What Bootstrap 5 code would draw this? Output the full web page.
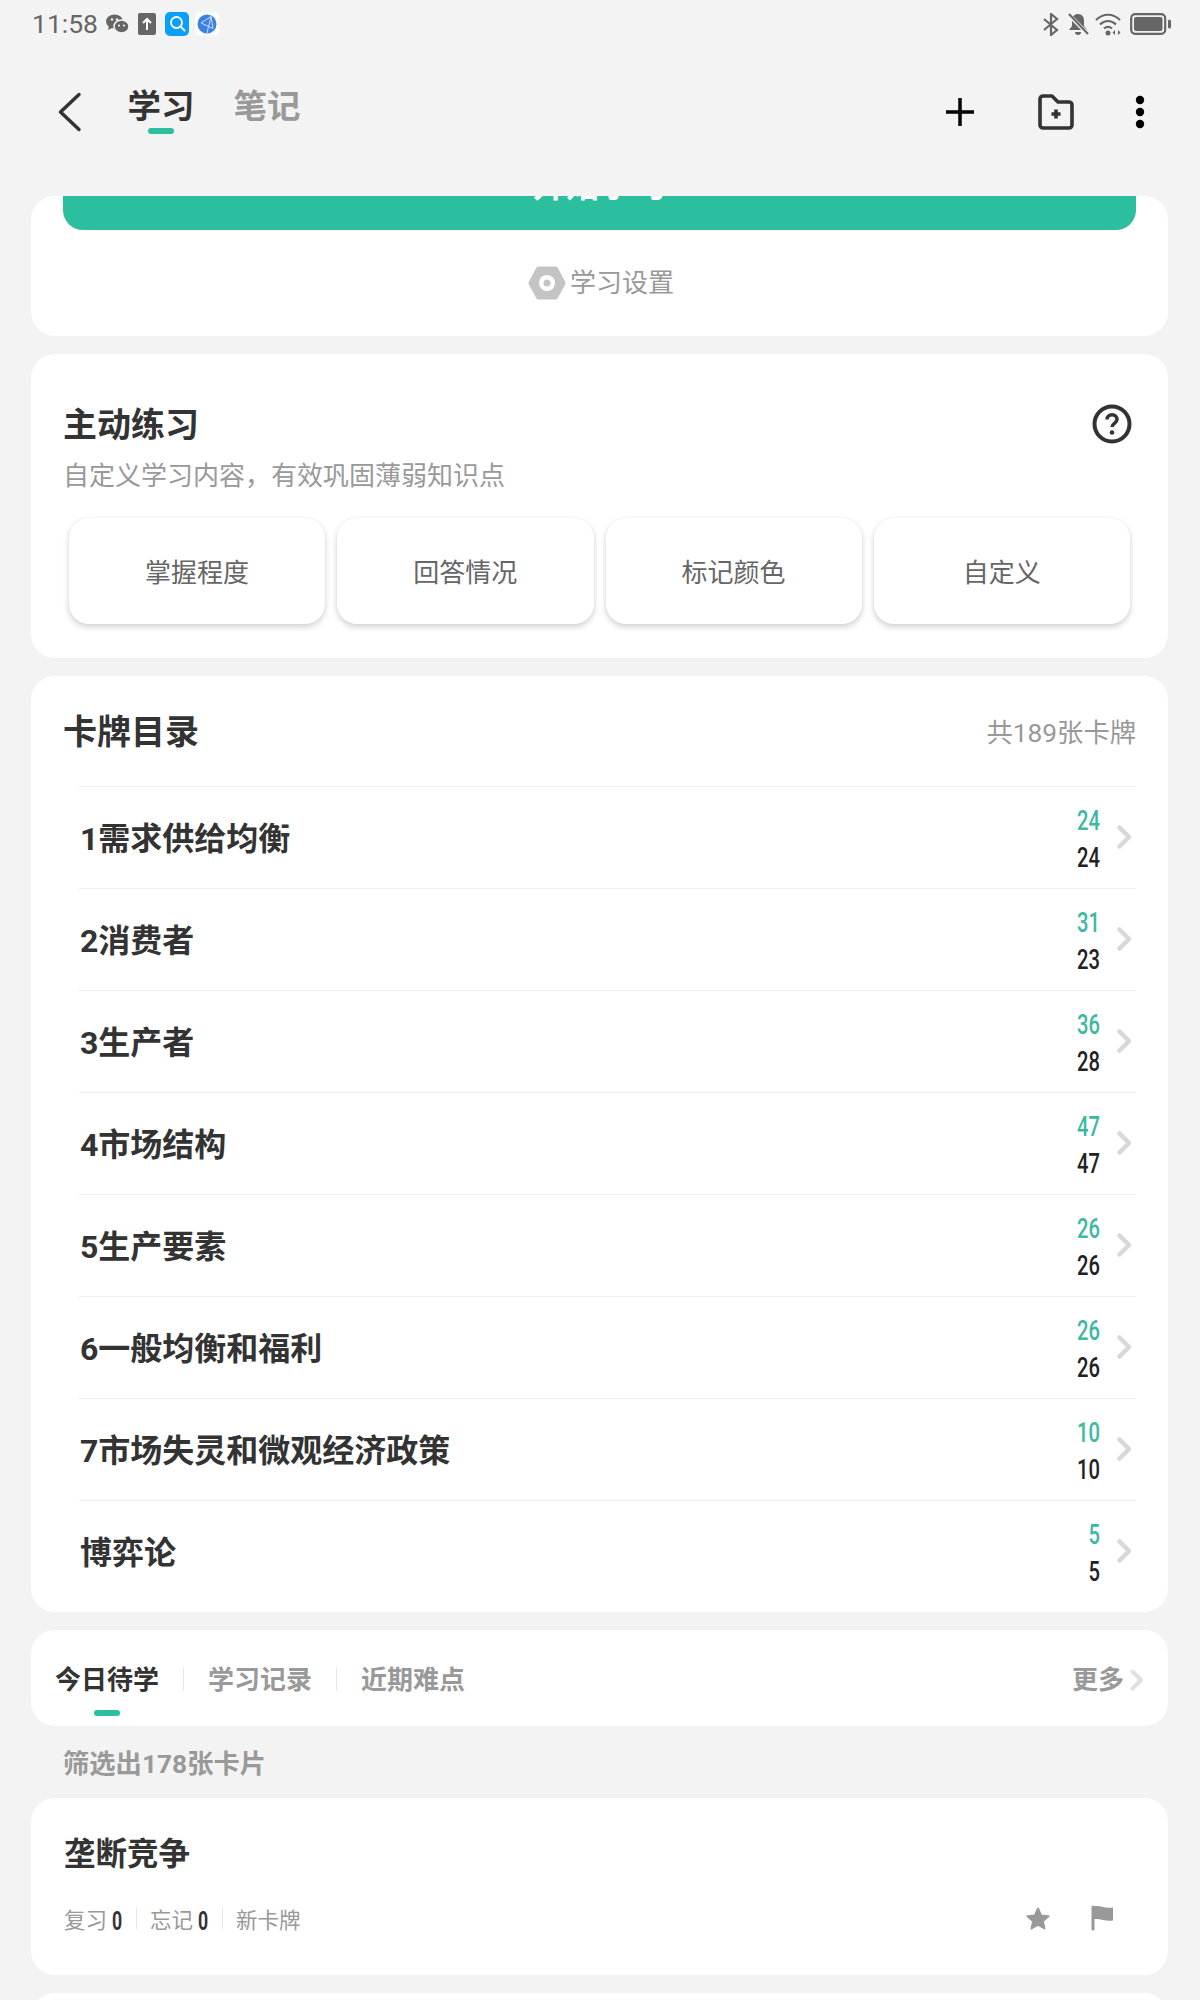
<!DOCTYPE html>
<html lang="zh">
<head>
    <meta charset="UTF-8">
    <title>学习</title>
    <link href="https://cdn.jsdelivr.net/npm/bootstrap@5.3.2/dist/css/bootstrap.min.css" rel="stylesheet">
    <style>
        body {
            background-color: #f3f3f3;
            font-family: Roboto, "Noto Sans CJK SC", "Liberation Sans", sans-serif;
            color: #333;
            width: 1200px;
            height: 2000px;
            overflow: hidden;
        }
        /* 상단 영역 */
        .status-row { height: 50px; padding: 0 29px 2px 32px; }
        .status-time { font-family: Roboto, sans-serif; font-size: 26.5px; line-height: 30px; color: #666; width: 65px; }
        .status-left { gap: 9px; }
        .status-right { gap: 8px; }
        .globe-icon { margin-left: -3px; }
        .wifi-icon { margin-left: -2px; }
        .top-nav { margin-top: 33px; height: 58px; padding: 0 54px 0 55px; margin-bottom: 55px; }
        .back-icon { margin-right: 42px; }
        .top-tab { font-size: 33.5px; line-height: 44px; padding-top: 2px; font-weight: 700; color: #999; margin-right: 38px; width: 68px; text-align: center; white-space: nowrap; }
        .top-tab.is-on { color: #333; }
        .tab-bar { display: block; width: 26px; height: 6px; border-radius: 3px; background: #2bbf9f; }
        .top-tab .tab-bar { margin: -1px 0 0 21px; }
        .plus-icon { margin-right: 60px; }
        .folder-icon { margin-right: 58px; }
        /* 스크롤 영역 */
        .scroll-area { height: 1804px; overflow: hidden; padding: 0 32px 0 31px; }
        .ui-card { border-radius: 24px; background: #fff; margin-bottom: 18px; }
        .start-card { height: 140px; }
        .start-btn {
            height: 90px; margin: -56px 32px 0; line-height: 85px; border-radius: 0 0 20px 20px;
            background: #2bbf9f; color: #fff; font-size: 33.5px; font-weight: 700; text-align: center;
            border: 0; padding: 0; width: auto; display: block;
        }
        .study-set { margin-top: 36px; padding-left: 3px; font-size: 26px; line-height: 34px; color: #999; gap: 4px; }
        .practice-card { height: 304px; padding: 49px 36px 0 32px; }
        .sec-title { font-size: 34px; line-height: 40px; font-weight: 700; color: #333; margin-top: 1.5px; }
        .sec-sub { font-size: 26px; line-height: 36px; color: #999; margin-top: 13.5px; }
        .practice-row { gap: 12px; margin: 24px 2px 0 6px; }
        .practice-row .practice-btn {
            flex: 1 1 0; height: 106px; padding: 10px 12px 5px; border-radius: 20px; background: #fff; font-size: 26px; color: #666;
            border: 0; box-shadow: 0 3px 6px rgba(0, 0, 0, .18), 0 0 2px rgba(0, 0, 0, .06);
        }
        .deck-head { height: 110px; padding: 0 32px 0 32px; }
        .deck-head .sec-title { margin-top: 1px; }
        .deck-total { font-size: 26.3px; color: #999; margin-top: 6px; }
        .deck-list { padding: 0 32px 10px 48px; background: transparent; }
        .deck-list .deck-item { height: 102px; padding: 0 5px 0 1px; border: 0; border-top: 1px solid #eee; border-radius: 0; background: transparent; }
        .deck-name { font-size: 32px; font-weight: 700; color: #333; margin-top: 2px; }
        .deck-nums { font-size: 28px; line-height: 37px; text-align: right; margin: 3px 17px 0 0; color: #222; font-weight: 500; width: 40px; }
        .deck-nums span { display: block; transform: scaleX(.72); transform-origin: right center; }
        .deck-nums .num-green { color: #3cb99f; }
        .deck-arrow { margin-bottom: 2px; }
        .tabs-card { height: 96px; padding: 31.5px 24px 0 24px; }
        .low-tab { font-size: 26px; line-height: 36px; font-weight: 700; color: #999; width: 104px; text-align: center; }
        .low-tab.is-on { color: #333; }
        .low-tab .tab-bar { margin: 12.5px 0 0 39px; }
        .low-sep { width: 1px; height: 24px; background: #e6e6e6; margin: 5.5px 24px 0; }
        .more-link { font-size: 26px; line-height: 36px; font-weight: 700; color: #999; gap: 6px; }
        .filter-note { font-size: 26.3px; line-height: 36px; font-weight: 700; color: #999; padding: 19.5px 0 16.5px 32px; }
        .topic-card { height: 177px; padding: 36.5px 54.5px 0 33px; }
        .topic-title { font-size: 31.5px; line-height: 40px; font-weight: 700; color: #333; }
        .topic-stats { margin-top: 25px; line-height: 32px; font-size: 21.5px; color: #999; }
        .topic-stats span:not(.stat-sep) { padding-top: 5px; }
        .topic-stats .stat-num { font-size: 26px; font-weight: 700; color: #333; margin-left: 5px; width: 11px; transform: scaleX(.68); transform-origin: left center; }
        .stat-sep { width: 1px; height: 22px; background: #e6e6e6; margin: 0 13px; }
        .star-icon { margin-right: 39.5px; }
        .next-card { height: 80px; }
    </style>
</head>
<body>

<div class="status-row d-flex align-items-center justify-content-between">
    <div class="status-left d-flex align-items-center">
        <span class="status-time">11:58</span>
        <svg width="23" height="20" viewBox="0 0 23 20">
            <ellipse cx="8.5" cy="7.5" rx="8.5" ry="7" fill="#666"/>
            <path d="M3 12l-1 4 4-2z" fill="#666"/>
            <ellipse cx="15.5" cy="12.5" rx="7.5" ry="6.5" fill="#666" stroke="#f3f3f3" stroke-width="1.5"/>
            <circle cx="6" cy="5.5" r="1.2" fill="#f3f3f3"/>
            <circle cx="11" cy="5.5" r="1.2" fill="#f3f3f3"/>
            <circle cx="13" cy="11.5" r="1.1" fill="#f3f3f3"/>
            <circle cx="18" cy="11.5" r="1.1" fill="#f3f3f3"/>
        </svg>
        <svg width="18" height="22" viewBox="0 0 18 22">
            <rect width="18" height="22" rx="2" fill="#666"/>
            <path d="M9 17V6M5 10l4-4 4 4" fill="none" stroke="#fff" stroke-width="2"/>
        </svg>
        <svg width="24" height="24" viewBox="0 0 24 24">
            <rect width="24" height="24" rx="5" fill="#0a9ffa"/>
            <circle cx="11.5" cy="10.5" r="5.5" fill="none" stroke="#fff" stroke-width="1.8"/>
            <path d="M15.5 14.5l4 4" stroke="#fff" stroke-width="1.8" stroke-linecap="round"/>
        </svg>
        <svg class="globe-icon" width="24" height="24" viewBox="0 0 24 24">
            <rect width="24" height="24" rx="5" fill="#fff"/>
            <circle cx="12" cy="12" r="9.5" fill="#3d80e6"/>
            <path d="M16 4.500L6 11l12 5.500zM16 4.500L12 21" fill="none" stroke="#cfe0fa" stroke-width="1"/>
        </svg>
    </div>
    <div class="status-right d-flex align-items-center">
        <svg width="16" height="23" viewBox="0 0 16 23">
            <path d="M1 6l13 11-6 5V1l6 5L1 17" fill="none" stroke="#666" stroke-width="2.200"/>
        </svg>
        <svg width="22" height="23" viewBox="0 0 22 23">
            <path d="M11 1c-4 0-6 3-6 7v5l-3 4h18l-3-4V8c0-4-2-7-6-7z" fill="#666"/>
            <path d="M8 19a3 3 0 0 0 6 0z" fill="#666"/>
            <path d="M1 1l20 20" stroke="#f3f3f3" stroke-width="4"/>
            <path d="M2 1l19 20" stroke="#666" stroke-width="2"/>
        </svg>
        <svg class="wifi-icon" width="27" height="23" viewBox="0 0 27 23">
            <path d="M1 7c7-7 17-7 24 0M5 11.500c5-4.500 11-4.500 16 0M9 15.500c2.500-2 5.500-2 8 0" fill="none" stroke="#666" stroke-width="2.200"/>
            <circle cx="13" cy="20" r="2.500" fill="#666"/>
            <path d="M20 17v5l-2.500-2.500zM23 17v5l2.500-2.500z" fill="#666"/>
        </svg>
        <svg width="41" height="22" viewBox="0 0 41 22">
            <rect x="1.200" y="1.200" width="34" height="19.600" rx="4" fill="none" stroke="#666" stroke-width="2.200"/>
            <rect x="4" y="4" width="28.500" height="14" rx="2" fill="#666"/>
            <rect x="38" y="6.500" width="3" height="9" rx="1.500" fill="#666"/>
        </svg>
    </div>
</div>

<nav class="top-nav d-flex align-items-center">
    <svg class="back-icon" width="30" height="44" viewBox="0 0 30 44">
        <path d="M24 4.500L5.500 22 24 39.500" fill="none" stroke="#333" stroke-width="3.500" stroke-linecap="round" stroke-linejoin="round"/>
    </svg>
    <div class="top-tab is-on align-self-start">学习<span class="tab-bar"></span></div>
    <div class="top-tab align-self-start">笔记</div>
    <div class="ms-auto d-flex align-items-center">
        <svg class="plus-icon" width="32" height="32" viewBox="0 0 32 32">
            <path d="M16 2v28M2 16h28" stroke="#000" stroke-width="3.500"/>
        </svg>
        <svg class="folder-icon" width="40" height="38" viewBox="0 0 40 38">
            <path d="M4 6a3 3 0 0 1 3-3h9l6 6h11a3 3 0 0 1 3 3v20a3 3 0 0 1-3 3H7a3 3 0 0 1-3-3z" fill="none" stroke="#333" stroke-width="3.600" stroke-linejoin="round"/>
            <path d="M20 16.500v9M15.500 21h9" stroke="#333" stroke-width="3.600"/>
        </svg>
        <svg width="12" height="34" viewBox="0 0 12 34">
            <circle cx="6" cy="5" r="4.200" fill="#000"/>
            <circle cx="6" cy="17" r="4.200" fill="#000"/>
            <circle cx="6" cy="29" r="4.200" fill="#000"/>
        </svg>
    </div>
</nav>

<main class="scroll-area">
    <div class="ui-card start-card card border-0">
        <button class="start-btn btn" type="button">开始学习</button>
        <div class="study-set d-flex align-items-center justify-content-center">
            <svg width="38" height="34" viewBox="0 0 38 34">
                <path d="M3 17l7.500-14h17L35 17l-7.500 14h-17z" fill="#c4c4c4" stroke="#c4c4c4" stroke-width="5" stroke-linejoin="round"/>
                <circle cx="19" cy="17" r="8" fill="#fff"/>
                <circle cx="19" cy="17" r="3.500" fill="#c4c4c4"/>
            </svg>
            <span>学习设置</span>
        </div>
    </div>

    <div class="ui-card practice-card card border-0">
        <div class="d-flex justify-content-between align-items-center">
            <div class="sec-title">主动练习</div>
            <svg width="40" height="40" viewBox="0 0 40 40">
                <circle cx="20" cy="20" r="17.500" fill="none" stroke="#333" stroke-width="4"/>
                <path d="M15 15.500c0-3 2.200-4.800 5-4.800s5 1.800 5 4.800c0 3.800-5 3.800-5 7.500" fill="none" stroke="#333" stroke-width="3.500"/>
                <circle cx="20" cy="28.500" r="2.300" fill="#333"/>
            </svg>
        </div>
        <div class="sec-sub">自定义学习内容，有效巩固薄弱知识点</div>
        <div class="practice-row d-flex">
            <button class="practice-btn btn" type="button">掌握程度</button>
            <button class="practice-btn btn" type="button">回答情况</button>
            <button class="practice-btn btn" type="button">标记颜色</button>
            <button class="practice-btn btn" type="button">自定义</button>
        </div>
    </div>

    <div class="ui-card card border-0">
        <div class="deck-head d-flex justify-content-between align-items-center">
            <div class="sec-title">卡牌目录</div>
            <div class="deck-total">共189张卡牌</div>
        </div>
        <ul id="deck-list" class="deck-list list-group list-group-flush"></ul>
    </div>

    <div class="ui-card tabs-card card border-0 flex-row align-items-start mb-0">
        <div class="low-tab is-on">今日待学<span class="tab-bar"></span></div>
        <div class="low-sep"></div>
        <div class="low-tab">学习记录</div>
        <div class="low-sep"></div>
        <div class="low-tab">近期难点</div>
        <div class="more-link ms-auto d-flex align-items-center">
            <span>更多</span>
            <svg width="14" height="22" viewBox="0 0 14 22">
                <path d="M2.500 2.500L11 11l-8.500 8.500" fill="none" stroke="#e0e0e0" stroke-width="4" stroke-linecap="round" stroke-linejoin="round"/>
            </svg>
        </div>
    </div>

    <div class="filter-note">筛选出178张卡片</div>

    <div class="ui-card topic-card card border-0">
        <div class="topic-title">垄断竞争</div>
        <div class="topic-stats d-flex align-items-center">
            <span>复习</span><span class="stat-num">0</span>
            <span class="stat-sep"></span>
            <span>忘记</span><span class="stat-num">0</span>
            <span class="stat-sep"></span>
            <span>新卡牌</span>
            <svg class="star-icon ms-auto" width="26" height="25" viewBox="0 0 26 25">
                <path d="M13 2.500l3 7 7.500.7-5.700 5 1.700 7.300-6.500-3.800-6.500 3.800 1.700-7.300-5.700-5 7.500-.7z" fill="#999" stroke="#999" stroke-width="2" stroke-linejoin="round"/>
            </svg>
            <svg width="23" height="26" viewBox="0 0 23 26">
                <path d="M2 2v22" stroke="#999" stroke-width="3" stroke-linecap="round"/>
                <path d="M2 1.500c7-2 12 2.500 20 1v13c-8 1.500-13-3-20-1z" fill="#999"/>
            </svg>
        </div>
    </div>

    <div class="ui-card next-card card border-0"></div>
</main>

<script>
    // 카드 목록 데이터
    const decks = [
        ['1需求供给均衡', 24, 24],
        ['2消费者', 31, 23],
        ['3生产者', 36, 28],
        ['4市场结构', 47, 47],
        ['5生产要素', 26, 26],
        ['6一般均衡和福利', 26, 26],
        ['7市场失灵和微观经济政策', 10, 10],
        ['博弈论', 5, 5]
    ];
    const list = document.getElementById('deck-list');
    decks.forEach(deck => {
        const li = document.createElement('li');
        li.className = 'deck-item list-group-item d-flex align-items-center';
        li.innerHTML = `<span class="deck-name me-auto">${deck[0]}</span>
            <span class="deck-nums"><span class="num-green">${deck[1]}</span><span>${deck[2]}</span></span>
            <svg class="deck-arrow" width="14" height="24" viewBox="0 0 14 24"><path d="M2.500 2.500L12 12l-9.500 9.500" fill="none" stroke="#d8d8d8" stroke-width="4.500" stroke-linecap="round" stroke-linejoin="round"/></svg>`;
        list.appendChild(li);
    });
</script>

<script src="https://cdn.jsdelivr.net/npm/bootstrap@5.3.2/dist/js/bootstrap.bundle.min.js"></script>
</body>
</html>
